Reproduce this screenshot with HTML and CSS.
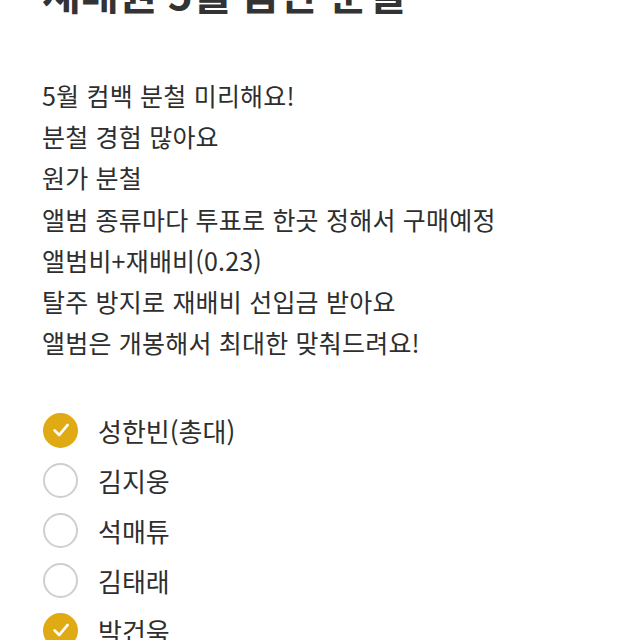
FILE: index.html
```html
<!DOCTYPE html>
<html lang="ko">
<head>
<meta charset="UTF-8">
<meta name="viewport" content="width=device-width, initial-scale=1.0">
<title>제베원 5월 음반 분철</title>
<link rel="stylesheet" href="styles.css">
</head>
<body>

<h1 class="title">재배원 5월 음반 분철</h1>

<div class="desc">
  <p>5월 컴백 분철 미리해요!</p>
  <p>분철 경험 많아요</p>
  <p>원가 분철</p>
  <p>앨범 종류마다 투표로 한곳 정해서 구매예정</p>
  <p>앨범비+재배비(0.23)</p>
  <p>탈주 방지로 재배비 선입금 받아요</p>
  <p>앨범은 개봉해서 최대한 맞춰드려요!</p>
</div>

<ul class="members">
  <li class="checked"><span class="check"><svg viewBox="0 0 24 24"><path d="M6.5 12.3l3.9 4 7.3-8.6"/></svg></span>성한빈(총대)</li>
  <li><span class="check"></span>김지웅</li>
  <li><span class="check"></span>석매튜</li>
  <li><span class="check"></span>김태래</li>
  <li class="checked"><span class="check"><svg viewBox="0 0 24 24"><path d="M6.5 12.3l3.9 4 7.3-8.6"/></svg></span>박건욱</li>
</ul>

</body>
</html>
```

FILE: styles.css
```css
* { margin: 0; padding: 0; box-sizing: border-box; }
body {
  font-family: "Noto Sans CJK KR", "Noto Sans", sans-serif;
  background: #fff;
  color: #2e2e2e;
  padding: 0 42px;
  overflow: hidden;
}

.title {
  font-size: 42px;
  font-weight: 700;
  line-height: 50px;
  margin-top: -33px;
  color: #333;
  letter-spacing: -0.5px;
}

.desc {
  margin-top: 58px;
  font-size: 25px;
  line-height: 41.2px;
  letter-spacing: 0.2px;
}

.members { list-style: none; margin-top: 42px; }
.members li {
  display: flex;
  align-items: center;
  height: 50px;
  font-size: 26px;
}
.check {
  width: 35px;
  height: 35px;
  border-radius: 50%;
  border: 2px solid #cfcfcf;
  margin: 0 20px 0 1px;
  display: flex;
  align-items: center;
  justify-content: center;
}
.checked .check { background: #e0aa14; border-color: #e0aa14; }
.check svg { width: 28px; height: 28px; }
.check path { fill: none; stroke: #fff; stroke-width: 2.3; stroke-linecap: round; stroke-linejoin: round; }
```
